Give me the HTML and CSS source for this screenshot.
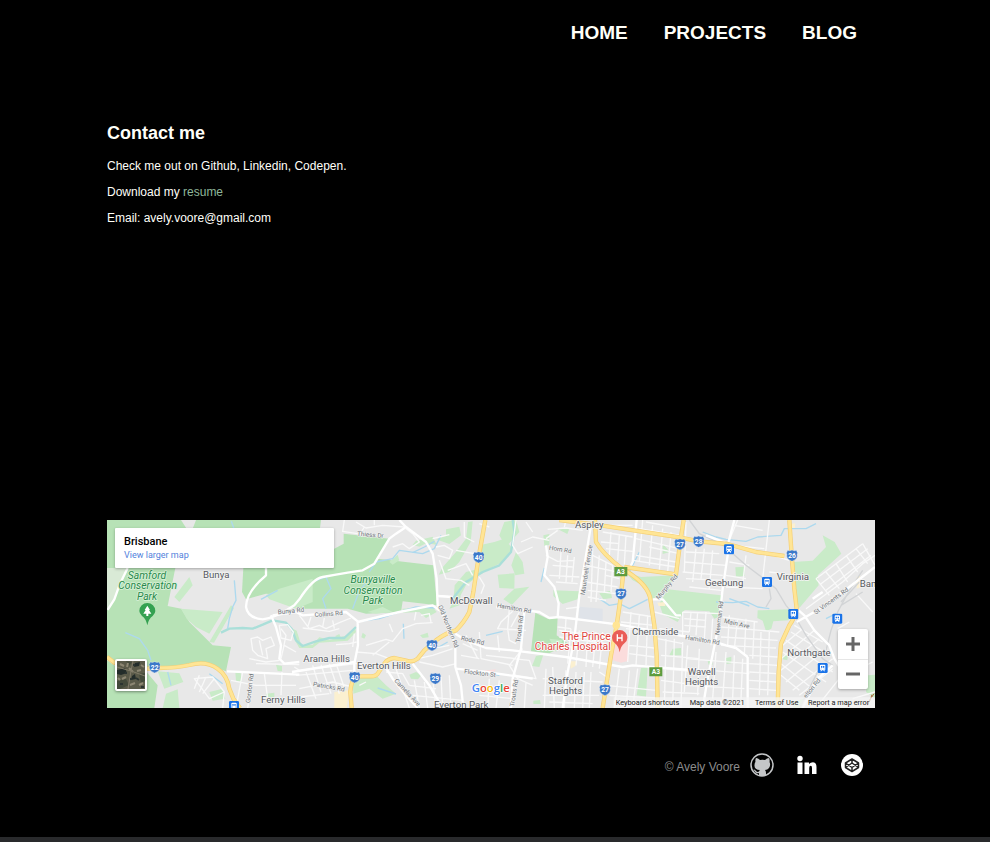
FILE: index.html
```html
<!DOCTYPE html>
<html lang="en">
<head>
<meta charset="utf-8">
<meta name="viewport" content="width=device-width, initial-scale=1">
<title>Contact me</title>
<link rel="stylesheet" href="styles.css">
</head>
<body>
<header class="site-header">
  <nav class="nav">
    <a href="#">HOME</a>
    <a href="#">PROJECTS</a>
    <a href="#">BLOG</a>
  </nav>
</header>

<main class="content">
  <section class="contact">
    <h1>Contact me</h1>
    <p>Check me out on Github, Linkedin, Codepen.</p>
    <p>Download my <a class="resume" href="#">resume</a></p>
    <p>Email: avely.voore@gmail.com</p>
  </section>

  <section class="map">
    <svg class="map-art" viewBox="23 24 2304 564" preserveAspectRatio="xMidYMid slice">
      <defs>
        <symbol id="shield" viewBox="0 0 36 36"><path d="M5 2Q11 5 18 1Q25 5 31 2L35 10Q32 14 34 19Q34 29 18 35Q2 29 2 19Q4 14 1 10Z" fill="#3b78c9" stroke="#fff" stroke-width="1"/></symbol>
        <symbol id="train" viewBox="0 0 32 32"><rect x="1" y="1" width="30" height="30" rx="4" fill="#1a73e8"/><path d="M8 8Q8 6 11 6H21Q24 6 24 8V21L21 23L23 26H20L18 23H14L12 26H9L11 23L8 21Z" fill="#fff"/><path d="M11 10H15V15H11ZM17 10H21V15H17ZM10 18H13V20H10ZM19 18H22V20H19Z" fill="#1a73e8"/></symbol>
      </defs>

      <rect x="23" y="24" width="2304" height="564" fill="#e8e8e8"/>

      <g class="park">
        <path d="M23 24H665L662 48H702V112L733 95V65L870 80L835 140L1002 160L1013 280L910 268L905 300L800 305L745 290H600L580 250L500 245L440 262L428 240L432 168H228L205 282L246 290L270 330L340 400L395 405L380 478L345 465L300 455L180 470L130 465L23 440Z"/>
        <path d="M23 445L60 470L140 478L175 520L165 588H23Z"/>
        <path d="M1308 302L1345 320L1375 316L1372 370L1408 396L1350 424L1295 418Z"/>
      </g>
      <path d="M23 168H85L62 215L45 262L25 294H23Z" fill="#d9ead6"/>
      <path d="M245 24H290L280 50H262Z" fill="#e8e8e8"/>
      <g class="green">
        <path d="M500 250L540 230L640 200L640 270L590 290L510 262Z"/>
        <path d="M245 290L370 300L330 365L290 345L262 320Z"/>
        <path d="M395 280L404 288L344 392L330 390Z"/>
        <path d="M225 255L270 195L280 220L240 270Z"/>
        <path d="M175 478L240 484L252 510L195 530ZM200 545L235 532L240 588H190ZM330 540L370 530L378 560L340 566ZM500 545L525 542V556H500ZM408 480L424 478L426 510L410 506Z"/>
        <path d="M530 458L548 462L548 478L535 477Z"/>
        <path d="M580 350L592 356L606 400L640 398L660 376L690 384L745 370L768 350L770 360L745 386L660 392L640 408H600L584 380Z"/>
        <path d="M760 500L830 490L860 520L890 545L850 560L810 530L762 545Z"/>
        <path d="M930 488L950 480L966 490L956 502L935 500ZM962 370L985 362L988 376L970 378ZM708 372L720 366L724 376L712 380ZM790 362L800 370L795 380L786 376Z"/>
        <path d="M950 86L1000 74L1012 98L980 94L960 104L940 98ZM1040 52L1080 44L1085 70L1050 96L1010 82L1040 72ZM1018 188L1030 166L1070 120L1100 80L1106 30L1120 28L1114 90L1080 150L1050 180Z"/>
        <path d="M870 150L895 128L900 145L880 158ZM805 300L850 285L880 300L830 305ZM910 290L1000 285L1012 300L980 318L960 300L910 302Z"/>
        <path d="M1050 290L1062 270L1066 220L1100 180L1140 170V190L1100 220L1084 250L1080 280Z"/>
        <path d="M1140 100L1185 90L1215 80L1240 110L1210 150L1170 170L1140 190ZM1215 30L1250 24L1260 60L1220 105L1200 70ZM1250 120L1270 150L1275 185L1248 190L1236 160Z"/>
        <path d="M1195 188L1246 184L1245 230L1200 228ZM1245 230L1290 224L1238 278L1212 262ZM1332 70L1350 66L1350 98L1335 102ZM1376 52L1410 50L1404 66ZM1362 235L1440 238L1435 262L1390 276L1362 252ZM1500 244L1534 236L1538 258L1512 262Z"/>
        <path d="M1500 375L1520 372L1520 385L1500 385ZM1625 468L1645 466L1640 554L1612 550ZM1350 380L1390 385L1370 420ZM1310 432L1332 428L1320 465L1298 462ZM1302 566L1322 564L1324 576H1302Z"/>
        <path d="M1578 180L1625 195L1728 190L1700 240L1660 262L1640 225L1600 205Z"/>
        <path d="M1705 232L1865 250V312L1845 320L1830 298L1756 294L1735 330L1690 306L1680 275ZM1720 410L1745 408L1746 430H1710ZM1908 166L1934 164L1936 192L1910 194ZM1880 438L1896 434L1896 454L1882 456ZM1825 448L1838 446L1840 458H1828ZM1690 95L1712 120L1690 126Z"/>
        <path d="M1975 295L2070 292L2068 325L2022 328L2016 350L2000 358L1990 326L1974 318ZM2078 150L2140 146L2180 105L2170 70L2206 90L2226 125L2155 190L2158 220L2100 288L2088 260ZM2305 490L2327 488V560L2300 540ZM2052 430L2066 426L2064 445L2050 442ZM2085 568L2115 560L2105 588H2080Z"/>
      </g>
      <g class="sand">
        <path d="M705 540L750 535L742 588H705ZM1412 448L1432 448L1428 462L1414 470ZM1674 272L1696 270L1698 282H1678ZM2272 196L2282 190L2285 225L2272 230ZM2078 35L2088 34L2086 50L2078 46Z"/>
      </g>
      <path d="M1546 378L1584 374L1588 446L1565 452L1539 444ZM1154 476L1190 472L1180 488Z" fill="#fbdcdc"/>
      <path d="M1440 284L1510 290V330L1440 322Z" fill="#dfe3e9"/>

      <g class="water">
        <path d="M365 362L390 350L430 348L460 350L490 338L520 325L560 332L578 352L590 385L610 402L650 388L690 378L735 378L770 345" class="creek"/>
        <path d="M78 362L120 380L145 415L155 445M405 205L410 265L400 285L390 320L385 350M396 28L404 50M445 75L475 95L500 100M485 262L535 235M205 480L215 520M330 485L370 515"/>
        <path d="M640 210L680 195L695 230L670 260L680 290M760 290L775 250L790 225L810 200M810 180L830 150L880 140L900 115L970 125L1005 110L1025 70"/>
        <path d="M780 328L840 320L900 300L950 285L1010 288L1040 300M940 122L975 105L1005 88M912 335L914 380M835 528L890 546M1010 410L1045 390"/>
        <path d="M1060 260L1100 210L1150 180L1200 160L1235 120L1245 60L1240 24" class="creek"/>
        <path d="M1325 210L1335 168M1500 260L1530 280L1560 275L1590 290L1620 275L1645 262M1620 120L1590 180M1160 370L1210 358M1140 480L1200 490"/>
        <path d="M1810 60L1850 75L1880 82L1940 88L1975 75L2045 70L2055 50L2120 50L2150 35M1850 270L1900 272L1940 268L1975 285L2010 290M2180 320L2210 305M1890 260L1950 282"/>
      </g>

      <g class="minor">
        <path d="M285 500L340 495L375 540L330 560L285 500ZM300 490L285 530M320 495L300 540M375 540L370 588M345 500L310 545"/>
        <path d="M455 380L475 375L490 385L515 375L525 400L500 410L505 440L475 430L460 415ZM480 385L490 430M450 440L500 450L540 445M540 340L565 338L582 360L575 385L545 378ZM545 350L560 370L552 410L545 440M555 400L590 420"/>
        <path d="M395 505L470 520L590 520M430 480L410 588M460 483L445 588M495 485L505 560M548 480L545 550M470 455L600 458"/>
        <path d="M735 24L730 58L775 65M770 30L800 48L850 40L915 45M780 70L795 45M825 24V40M600 310L630 350L660 340L680 350L720 332L755 318M635 315L625 345M675 318L670 345M700 325L705 350M610 348L690 358L720 350"/>
        <path d="M710 398L750 395L772 390M760 405L765 365M800 400L860 382L880 388L910 350L950 335L1000 332M820 430L870 390M880 360L870 335M770 420L830 425L870 440M950 300L945 325M965 310L990 305L995 330"/>
        <path d="M585 465L600 475L770 455M590 490L760 475M640 460L665 540M665 458L695 545M690 455L720 545M712 460L736 530M600 530L700 510L760 525M620 480L650 560M600 555L690 545"/>
        <path d="M770 455L850 460M780 520L800 510M860 480L910 485L930 520M890 470L930 588M930 520L1010 530M945 505L960 588M975 510L985 588M1000 500L1010 588M1025 495L1030 588M1050 490L1055 588M940 550L1090 565"/>
        <path d="M955 440L1000 430L1060 410M960 450L1030 465L1070 455M1000 410L1050 400M1090 395L1135 415M1100 370L1135 440M1140 360L1145 440M1085 430L1140 440M880 105L910 95L930 110L960 90L940 65L920 50"/>
        <path d="M1010 105L1035 100L1060 115L1050 140L1015 130M1000 80L1050 68M1095 30L1095 75L1125 90M1070 115L1125 125M1020 145L1040 200L1085 205L1110 220M1045 175L1100 155L1120 190M1012 250L1060 255"/>
        <path d="M1140 195L1155 220L1145 245M1140 35L1170 45M1250 24L1240 100L1255 125L1300 105M1265 90L1300 75L1350 85M1280 30L1300 60M1230 290L1225 350L1230 385L1250 395M1260 300L1235 345M1280 355L1195 350L1205 330L1240 298"/>
        <path d="M1345 52L1400 48L1450 55M1340 80L1375 55M1340 130L1375 148L1425 145M1360 160L1420 165M1350 190L1440 195M1370 210L1435 215M1385 120L1380 200M1405 130L1400 210M1425 135L1418 210M1400 290L1440 285M1375 345L1415 350"/>
        <path d="M1400 24L1395 45M1510 60L1600 75M1505 90L1560 95M1520 110L1600 118M1535 60L1530 130M1560 70L1555 145M1580 70L1575 158M1480 130L1540 160M1460 160L1555 180M1480 110L1475 270M1500 130L1490 270M1520 150L1515 240M1540 160L1535 240M1460 210L1555 225M1465 235L1550 245M1465 255L1520 265M1520 190L1560 200"/>
        <path d="M1380 355L1520 375M1370 400L1510 415M1415 350L1405 455M1440 355L1430 460M1465 360L1460 465M1490 360L1480 465M1380 375L1520 395M1400 320L1395 400M1510 360L1500 470M1440 375L1530 385"/>
        <path d="M1340 470L1335 588M1360 465L1365 588M1400 475L1395 588M1430 480L1425 588M1455 480L1450 588M1475 480L1470 588M1330 500L1510 510M1330 550L1500 550M1350 570L1480 575M1240 440L1290 445L1310 500L1250 490M1160 430L1250 440M1200 420L1195 370"/>
        <path d="M1270 410L1230 460L1255 500L1300 520M1170 500L1165 588M1200 505L1190 588M1255 500L1230 588M1140 550L1240 560M1280 510L1275 588M1145 440L1240 460M1500 480L1530 500M1520 520L1670 535M1530 550L1670 558M1560 470L1545 588M1590 475L1580 588M1615 470L1600 588"/>
        <path d="M1610 80L1740 110M1620 50L1745 70M1630 24L1620 150M1660 40L1650 160M1690 50L1680 175M1715 60L1705 180M1610 130L1730 150M1650 105L1740 125M1640 30L1750 50M1760 30L1755 180M1500 40L1600 40M1730 165L1600 145"/>
        <path d="M1570 300L1665 315M1565 330L1665 340M1580 350L1660 360M1595 300L1585 450M1620 310L1610 460M1645 310L1640 460M1590 400L1665 408M1590 425L1665 435M1665 300L1740 320M1675 380L1750 395M1680 350L1770 360M1685 430L1800 440M1685 470L1800 480M1685 505L1760 515M1690 540L1800 545M1700 380L1695 588M1725 380L1720 588M1750 390L1745 588"/>
        <path d="M1750 300V370M1750 300L1860 305M1755 320L1820 325M1755 340L1820 345M1775 300L1770 360M1795 300L1790 370M1820 300L1815 380M1840 320L1835 400M1750 370L1840 390M1760 440L1950 455M1770 470L1950 485M1760 520L1935 530M1765 400L1755 540M1800 410L1795 550M1850 420L1840 560M1880 420L1870 560M1905 430L1900 560M1930 440L1925 560"/>
        <path d="M1760 120L1860 125M1755 150L1880 160M1750 180L1870 190M1790 110L1780 210M1815 110L1805 200M1840 115L1830 230M1760 200L1870 205M1770 225L1865 235M1905 40L1990 55M1915 24L1890 85M1900 100L1995 110M2010 24L1990 200M1940 130L1930 215M1890 150L1950 160M1880 190L1940 200M1880 225L1990 230M2020 130L2070 145M2010 180L2050 185"/>
        <path d="M1870 315L1975 330M1865 345L2040 360M1865 375L2035 385M1865 400L2030 408M1890 310L1885 400M1915 320L1905 410M1940 320L1935 430M1965 330L1960 440M1985 360L1980 550M2010 360L2005 550M1950 430L2035 435M1950 455L2035 460M1950 480L2030 485M1950 505L2030 510M1950 530L2030 535"/>
        <path d="M2060 385L2200 480M2075 360L2190 430M2085 340L2170 390M2050 420L2180 510M2045 455L2140 530M2045 490L2100 535M2050 400L2110 350M2045 440L2145 355M2045 475L2160 380M2060 510L2180 410M2080 535L2200 440M2100 550L2200 470"/>
        <path d="M2120 290L2230 210L2290 155L2327 130M2150 200L2290 95M2165 215L2305 110M2180 235L2315 130M2150 200L2190 250M2180 180L2220 230M2210 155L2245 210M2240 130L2275 180M2270 110L2305 155M2290 95L2327 160M2270 245L2320 300M2215 350L2250 330M2150 588L2220 500M2280 470L2320 450M2260 560L2327 540"/>
      </g>

      <g class="rail">
        <path d="M1770 24L1800 65L1870 98L1940 160L2000 205L2030 230L2060 280L2085 310L2120 370L2170 440L2200 460M2180 415L2195 355L2215 300L2250 235L2290 175M2225 280L2290 240M2225 270L2280 210M2010 230L2015 260L2000 285M2100 588L2160 470"/>
      </g>

      <g class="street">
        <path d="M85 168L62 215L45 262L25 294M500 168L500 190Q440 240 440 285Q445 318 490 322Q530 318 585 280L600 262M600 262Q640 200 670 195L710 188L745 182L790 175L825 155L870 80L890 65L920 45L900 24"/>
        <path d="M515 310L530 345L545 400L540 440L555 455L600 450M520 310L590 300L610 310L740 300L775 328L776 400L765 455M775 330L900 300L1000 280L1020 295"/>
        <path d="M920 45L980 90L1000 125L1012 200L1015 280L1050 350L1068 400L1068 465L1085 520L1092 588"/>
        <path d="M383 478L470 482L600 488M578 480L765 450M765 455V490M940 455L990 520L1030 588M855 460L880 500L920 550L955 588"/>
        <path d="M1068 365L1100 385L1160 408L1240 415L1400 435L1570 465L1600 460L1830 478M1190 285L1320 300L1350 318L1380 315L1560 338L1710 365L1850 390L1880 400L1910 408L1945 435"/>
        <path d="M1475 40L1440 250L1425 380L1405 480L1390 588M1612 24L1600 150L1590 170M1340 100L1345 135L1335 190L1365 225L1378 275L1375 315M1275 300L1265 410L1240 500L1235 588"/>
        <path d="M1905 24L1885 100L1885 130L1870 230L1858 340L1825 500L1810 588M1945 435V588M1660 262L1690 262L1730 310L1745 310M2092 290L2115 310L2145 355L2190 400L2205 440L2230 480M2092 330L2145 300L2250 225L2327 165M2110 588L2155 500L2200 460M2170 240L2140 260"/>
        <path d="M1015 252L1060 255M1070 470L1160 480L1300 500M1820 70L1885 95"/>
      </g>

      <g class="highway-edge">
        <path id="r22" d="M23 435L45 452Q110 475 180 468Q230 468 270 459Q320 445 355 470Q384 490 390 530L402 560L422 588"/>
        <path id="r40" d="M1158 24L1138 135L1122 240L1110 300Q1095 330 1070 355Q1040 362 1010 385L975 415L955 440Q940 452 920 446L885 438Q865 440 855 455L835 485Q830 493 815 493H770Q755 505 753 540L757 588"/>
        <path id="a3" d="M1380 24L1490 38L1740 76L1798 88L1885 96L1970 120L2055 132M1487 24L1490 90Q1510 125 1565 168Q1640 210 1652 255L1665 340L1672 430L1675 588M1572 180L1565 250L1552 340L1535 430L1510 588M1575 165L1730 187L1742 95L1753 24"/>
        <path id="r26" d="M2070 24L2077 130L2085 230L2092 290Q2085 320 2070 340L2045 395L2038 480L2035 588"/>
      </g>
      <g class="highway">
        <use href="#r22"/><use href="#r40"/><use href="#a3"/><use href="#r26"/>
        <circle cx="1551" cy="340" r="7"/>
      </g>

      <g>
        <use href="#shield" x="148" y="448" width="36" height="36"/>
        <use href="#shield" x="748" y="478" width="36" height="36"/>
        <use href="#shield" x="980" y="382" width="36" height="36"/>
        <use href="#shield" x="990" y="482" width="36" height="36"/>
        <use href="#shield" x="1120" y="118" width="36" height="36"/>
        <use href="#shield" x="1547" y="228" width="36" height="36"/>
        <use href="#shield" x="1499" y="516" width="36" height="36"/>
        <use href="#shield" x="1724" y="79" width="36" height="36"/>
        <use href="#shield" x="1780" y="71" width="36" height="36"/>
        <use href="#shield" x="2060" y="113" width="36" height="36"/>
        <path d="M1545 165H1584V193H1545ZM1650 466H1689V493H1650Z" fill="#5d9c3f"/>
      </g>
      <g class="route">
        <text x="166" y="473">22</text><text x="766" y="503">40</text><text x="998" y="407">40</text><text x="1008" y="507">29</text><text x="1138" y="143">40</text>
        <text x="1565" y="253">27</text><text x="1517" y="541">27</text><text x="1742" y="104">27</text><text x="1798" y="96">28</text><text x="2078" y="138">26</text>
        <text x="1564" y="186">A3</text><text x="1670" y="487">A3</text>
      </g>
      <g>
        <use href="#train" x="388" y="566" width="32" height="32"/>
        <use href="#train" x="1873" y="96" width="32" height="32"/>
        <use href="#train" x="1987" y="194" width="32" height="32"/>
        <use href="#train" x="2066" y="290" width="32" height="32"/>
        <use href="#train" x="2198" y="304" width="32" height="32"/>
        <use href="#train" x="2154" y="452" width="32" height="32"/>
      </g>

      <g class="road-name">
        <text transform="translate(773 71) rotate(5)">Thiess Dr</text>
        <text transform="translate(536 307) rotate(-6)">Bunya Rd</text>
        <text transform="translate(646 315) rotate(-4)">Collins Rd</text>
        <text transform="translate(640 522) rotate(10)">Patricks Rd</text>
        <text transform="translate(452 574) rotate(-83)">Gordon Rd</text>
        <text transform="translate(1016 283) rotate(68)">Old Northern Rd</text>
        <text transform="translate(1084 384) rotate(12)">Rode Rd</text>
        <text transform="translate(1094 484) rotate(7)">Flockton St</text>
        <text transform="translate(884 507) rotate(47)">Camelia Ave</text>
        <text transform="translate(1192 286) rotate(10)">Hamilton Rd</text>
        <text transform="translate(1348 113) rotate(9)">Horn Rd</text>
        <text transform="translate(1456 250) rotate(-81)">Maundrell Terrace</text>
        <text transform="translate(1262 392) rotate(-83)">Trouts Rd</text>
        <text transform="translate(1244 584) rotate(-81)">Trouts Rd</text>
        <text transform="translate(1678 264) rotate(-50)">Murphy Rd</text>
        <text transform="translate(1860 370) rotate(-83)">Newman Rd</text>
        <text transform="translate(1873 332) rotate(13)">Main Ave</text>
        <text transform="translate(1757 382) rotate(9)">Hamilton Rd</text>
        <text transform="translate(2149 308) rotate(-36)">St Vincents Rd</text>
        <text transform="translate(2121 560) rotate(-51)">elton Rd</text>
      </g>
      <g class="place">
        <text x="311" y="199">Bunya</text><text x="485" y="574">Ferny Hills</text><text x="612" y="450">Arana Hills</text><text x="773" y="471">Everton Hills</text>
        <text x="1052" y="277">McDowall</text><text x="1004" y="587">Everton Park</text><text x="1427" y="48">Aspley</text>
        <text x="1598" y="370">Chermside</text><text x="1346" y="515">Stafford</text><text x="1349" y="545">Heights</text>
        <text x="1817" y="223">Geebung</text><text x="2032" y="203">Virginia</text><text x="2281" y="224">Ban</text>
        <text x="2064" y="431">Northgate</text><text x="1765" y="490">Wavell</text><text x="1757" y="519">Heights</text>
      </g>
      <g class="park-name">
        <text x="143" y="201">Samford</text><text x="145" y="232">Conservation</text><text x="143" y="264">Park</text>
        <text x="821" y="214">Bunyaville</text><text x="821" y="245">Conservation</text><text x="820" y="277">Park</text>
      </g>
      <path d="M144 340Q140 320 128 312Q120 304 120 297A24 24 0 0 1 168 297Q168 304 160 312Q148 320 144 340Z" fill="#34a151"/>
      <path d="M144 281L152 294H149L156 305H147V312H141V305H132L139 294H136Z" fill="#fff"/>
      <g class="hospital"><text x="1534" y="383">The Prince</text><text x="1534" y="414">Charles Hospital</text></g>
      <path d="M1561 421Q1558 402 1546 393Q1538 386 1538 377A23 23 0 0 1 1584 377Q1584 386 1576 393Q1564 402 1561 421Z" fill="#ea5d57"/>
      <path d="M1554 367V388M1568 367V388M1554 378H1568" stroke="#fff" stroke-width="4" fill="none"/>
      <text class="google" x="1117" y="539"><tspan fill="#4285f4">G</tspan><tspan fill="#ea4335">o</tspan><tspan fill="#fbbc05">o</tspan><tspan fill="#4285f4">g</tspan><tspan fill="#34a853">l</tspan><tspan fill="#ea4335">e</tspan></text>
      <path d="M2304 580L2312 562M2310 570L2318 548M2314 560L2324 545" stroke="#a86a3a" stroke-width="3" fill="none"/>

      <path d="M1543 556H2327V588H1543Z" fill="#f5f5f5" fill-opacity=".75"/>
      <g class="map-legal">
        <a href="#"><text x="1549" y="578">Keyboard shortcuts</text></a>
        <text x="1771" y="578">Map data ©2021</text>
        <a href="#"><text x="1967" y="578">Terms of Use</text></a>
        <a href="#"><text x="2126" y="578">Report a map error</text></a>
      </g>
    </svg>

    <div class="map-card">
      <strong>Brisbane</strong>
      <a href="#">View larger map</a>
    </div>

    <button class="satellite" type="button" aria-label="Show satellite imagery">
      <svg viewBox="0 0 28 28">
        <rect width="28" height="28" fill="#5a5a49"/>
        <path d="M0 9L8 7L10 12L4 14L0 13ZM18 2L23 1L22 5L17 6ZM15 15L18 13L19 18L14 19Z" fill="#232c2a"/>
        <path d="M0 20L9 18L12 24L3 28H0ZM22 13L28 12V20L24 22ZM9 0L15 1L12 5Z" fill="#434a3b"/>
        <path d="M3 3L7 5M12 7L16 11M20 10L24 9M5 18L9 16M13 24L18 22M22 24L26 22M1 17L3 19M11 2L10 6M24 4L27 6" stroke="#8d8773" stroke-width="2"/>
        <path d="M0 6L14 10L28 15M14 10L11 28M16 0L14 10" stroke="#807b69" fill="none"/>
        <path d="M3 23H6M16 4H18M19 17L22 19M8 12H10M24 26H27M13 18H15" stroke="#2b3431" stroke-width="2"/>
      </svg>
    </button>

    <div class="zoom">
      <button type="button" aria-label="Zoom in"><svg viewBox="0 0 14 14"><path d="M7 0V14M0 7H14"/></svg></button>
      <button type="button" aria-label="Zoom out"><svg viewBox="0 0 14 14"><path d="M0 7H14"/></svg></button>
    </div>
  </section>
</main>

<footer class="site-footer">
  <span class="copyright">© Avely Voore</span>
  <div class="social">
    <a href="#" aria-label="Github">
      <svg viewBox="0 0 24 24"><circle cx="12" cy="12" r="11" fill="#000" stroke="#c4c6c8" stroke-width="1.5"/><path d="M6 5Q8 5 10 7Q12 6.500 15 7Q17 5 19 5Q20 7 19.500 9Q21 12 19 15Q17.500 17 15 17Q16 18 16 20V23H9V20Q6 21 4.500 18L3.500 16.500Q5 16 6 18Q7.500 19.500 9 18.500Q9 17.500 10 17Q4 16.500 4.500 12Q4.500 10 5.500 9Q5 7 6 5Z" fill="#c4c6c8"/></svg>
    </a>
    <a href="#" aria-label="Linkedin">
      <svg viewBox="0 0 24 24"><g fill="#fff"><circle cx="5" cy="5.500" r="2.700"/><path d="M2.500 9.500H7.500V21H2.500ZM9.500 9.500H14V11Q15.500 9.200 18 9.200Q21.500 9.500 21.500 14V21H17V15Q17 12.800 15.700 12.800Q14.200 12.800 14.200 15V21H9.500Z"/></g></svg>
    </a>
    <a href="#" aria-label="Codepen">
      <svg viewBox="0 0 24 24"><circle cx="12" cy="12" r="11" fill="#fff"/><path d="M12 6L18.500 10V14.500L12 18.500L5.500 14.500V10ZM12 6V10L18.500 14.500M12 10L5.500 14.500M5.500 10L12 14.500L18.500 10M12 14.500V18.500" fill="none" stroke="#222" stroke-width="1.500" stroke-linejoin="round"/></svg>
    </a>
  </div>
</footer>
<div class="bottom-bar"></div>
</body>
</html>
```
FILE: styles.css
```css
* { box-sizing: border-box; }

body {
  margin: 0;
  min-height: 100vh;
  display: flex;
  flex-direction: column;
  background: #000;
  color: #fffff8;
  font: 12px/14px "Liberation Sans", Arial, sans-serif;
}

a { color: inherit; text-decoration: none; }

button { border: 0; padding: 0; cursor: pointer; }

.site-header { padding: 21px 133px 0 107px; }

.nav {
  display: flex;
  flex-wrap: wrap;
  justify-content: flex-end;
  gap: 8px 36px;
  font-size: 19px;
  font-weight: bold;
  line-height: 24px;
}

.content { padding: 78px 115px 0 107px; }

.contact { min-height: 397px; }

.contact h1 {
  margin: 0 0 15px;
  font-size: 18px;
  line-height: 21px;
}

.contact p { margin: 0 0 12px; }

.resume { color: #8fb79b; }

.map {
  position: relative;
  height: 188px;
  overflow: hidden;
  font-family: Roboto, sans-serif;
}

.map-art { display: block; width: 100%; height: 100%; }

.park { fill: #b7e2b6; }
.green { fill: #c9ebc8; }
.sand { fill: #fbf0d0; }
.water { fill: none; stroke: #add9ee; stroke-width: 4; stroke-linejoin: round; }
.creek { stroke: #aadfd9; stroke-width: 7; }
.minor { fill: none; stroke: #f9f9f9; stroke-width: 4; stroke-linejoin: round; }
.rail { fill: none; stroke: #d2d4d6; stroke-width: 4; }
.street { fill: none; stroke: #fff; stroke-width: 7; stroke-linejoin: round; }

.highway-edge { stroke: #f5cf75; stroke-width: 13; }
.highway { stroke: #ffe595; stroke-width: 9; }
/* Width and colour are inherited so each route draws once as edge, once as surface. */
.highway-edge,
.highway { fill: none; stroke-linejoin: round; }

.map-art text { paint-order: stroke; stroke-linejoin: round; }

.route { fill: #fff; font-size: 20px; font-weight: 700; text-anchor: middle; }
.road-name { fill: #6e7378; stroke: #f2f2f2; stroke-width: 4; font-size: 19px; }
.place { fill: #56595e; stroke: #f4f4f4; stroke-width: 5; font-size: 29px; }
.park-name { fill: #27894b; stroke: #d9f1d8; stroke-width: 5; font-size: 31px; font-style: italic; text-anchor: middle; }
.hospital { fill: #e0443e; stroke: #fff; stroke-width: 5; font-size: 31px; text-anchor: end; }
.google { stroke: #fff; stroke-width: 5; font-family: "Open Sans", sans-serif; font-size: 34px; font-weight: 600; }
.map-legal { fill: #222; font-size: 22px; }

.map-card {
  position: absolute;
  top: 8px;
  left: 8px;
  width: 219px;
  padding: 7px 9px 6px;
  display: flex;
  flex-direction: column;
  background: #fff;
  border-radius: 1px;
  box-shadow: 0 1px 3px rgb(0 0 0 / 30%);
  color: #000;
  font-size: 11px;
  line-height: 13px;
}

.map-card strong { font-weight: 500; line-height: 14px; }
.map-card a { color: #5282dc; font-size: 9px; }

.satellite {
  position: absolute;
  bottom: 17px;
  left: 8px;
  width: 32px;
  height: 32px;
  border: 2px solid #fff;
  border-radius: 2px;
  box-shadow: 0 1px 3px rgb(0 0 0 / 40%);
}

.satellite svg { display: block; }

.zoom {
  position: absolute;
  right: 7px;
  bottom: 19px;
  width: 30px;
  background: #fff;
  border-radius: 2px;
  box-shadow: 0 1px 3px rgb(0 0 0 / 30%);
}

.zoom button {
  display: grid;
  place-items: center;
  width: 100%;
  height: 30px;
  background: none;
}

.zoom button + button { box-shadow: inset 0 1px #e6e6e6; }
.zoom svg { width: 14px; height: 14px; fill: none; stroke: #666; stroke-width: 3; }

.site-footer {
  display: flex;
  flex-wrap: wrap;
  justify-content: flex-end;
  align-items: center;
  gap: 10px;
  padding: 45px 126px 0 107px;
}

.copyright { color: #8c8c8c; padding-top: 4px; }
.social { display: flex; gap: 21px; }
.social svg { display: block; width: 24px; height: 24px; }

.bottom-bar { height: 5px; margin-top: auto; background: #292a2c; }
```
